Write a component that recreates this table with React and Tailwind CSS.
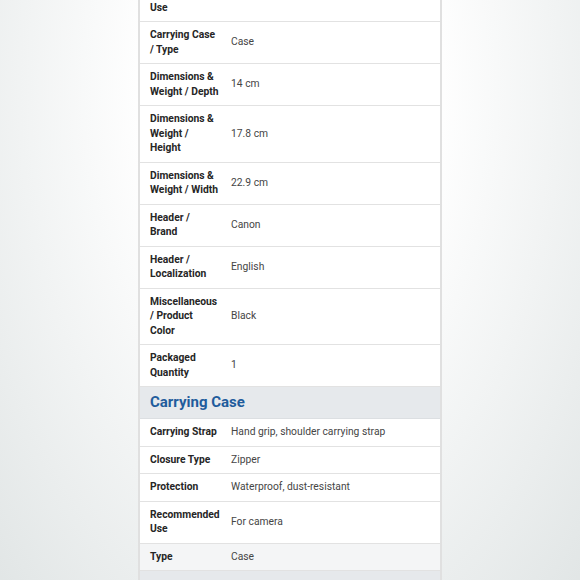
import React from 'react';

// labels are split into the lines the spec table wraps them to
const specsTop = [
  { label: ['Recommended', 'Use'], value: '' },
  { label: ['Carrying Case', '/ Type'], value: 'Case' },
  { label: ['Dimensions &', 'Weight / Depth'], value: '14 cm' },
  { label: ['Dimensions &', 'Weight /', 'Height'], value: '17.8 cm' },
  { label: ['Dimensions &', 'Weight / Width'], value: '22.9 cm' },
  { label: ['Header /', 'Brand'], value: 'Canon' },
  { label: ['Header /', 'Localization'], value: 'English' },
  { label: ['Miscellaneous', '/ Product', 'Color'], value: 'Black' },
  { label: ['Packaged', 'Quantity'], value: '1' },
];

const carryingCase = [
  { label: ['Carrying Strap'], value: 'Hand grip, shoulder carrying strap' },
  { label: ['Closure Type'], value: 'Zipper' },
  { label: ['Protection'], value: 'Waterproof, dust-resistant' },
  { label: ['Recommended', 'Use'], value: 'For camera' },
  { label: ['Type'], value: 'Case', shaded: true },
];

const SpecRow = ({ label, value, shaded }) => (
  <div
    className={`flex items-center px-[10px] py-[6px] border-b border-[#e2e2e2] ${
      shaded ? 'bg-[#f4f5f6]' : 'bg-white'
    }`}
  >
    <div className="w-[71px] shrink-0 font-bold text-[#262626] whitespace-nowrap">
      {label.map((line) => (
        <div key={line}>{line}</div>
      ))}
    </div>
    <div className="ml-[10px] text-[#454545]">{value}</div>
  </div>
);

const SectionHeader = ({ title }) => (
  <div className="h-[32px] flex items-center px-[10px] bg-[#e6e9ec] border-b border-[#dcdfe2]">
    <h3 className="text-[15px] font-bold text-[#1f5c9c]">{title}</h3>
  </div>
);

export default function App() {
  return (
    <div
      className="w-[580px] h-[580px] overflow-hidden bg-[radial-gradient(ellipse_at_50%_15%,#ffffff_35%,#dde2e2_110%)]"
      style={{ fontFamily: 'Roboto, "Liberation Sans", sans-serif' }}
    >
      <div className="w-[304px] mx-auto mt-[-20px] border-x-2 border-[#e0e0e0] text-[10.3px] leading-[14.5px]">
        {specsTop.map((s) => (
          <SpecRow key={s.label.join(' ')} {...s} />
        ))}
        <SectionHeader title="Carrying Case" />
        {carryingCase.map((s) => (
          <SpecRow key={s.label.join(' ')} {...s} />
        ))}
        <SectionHeader title="Dimensions & Weight" />
      </div>
    </div>
  );
}
